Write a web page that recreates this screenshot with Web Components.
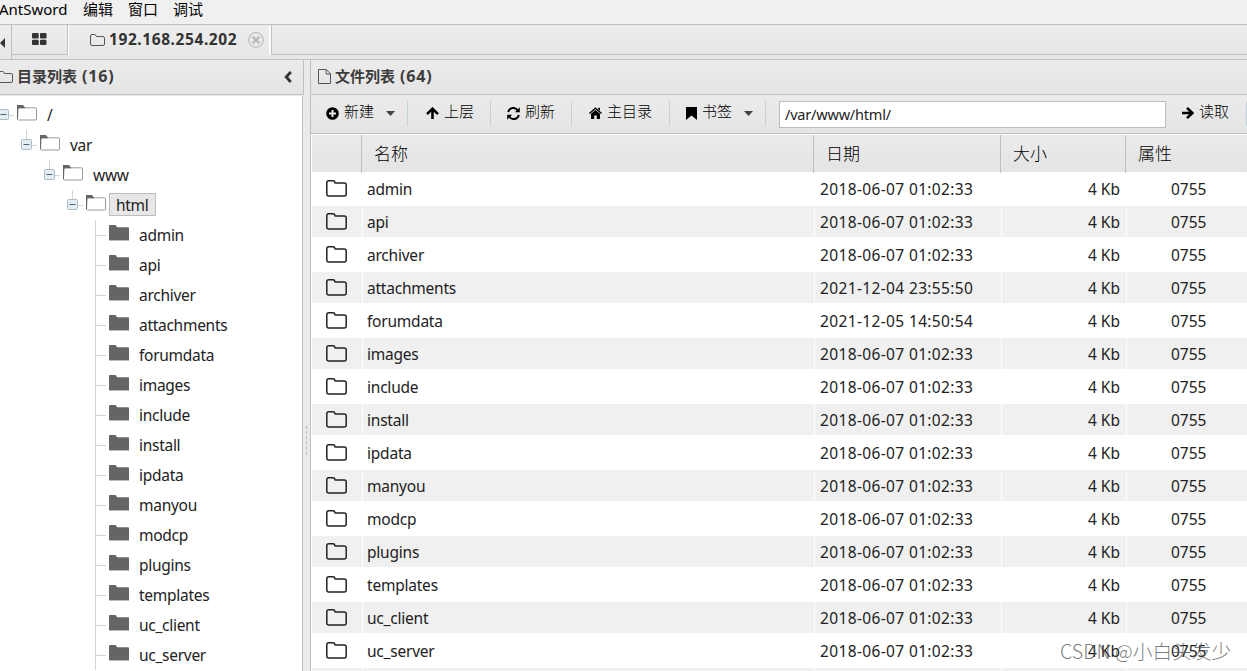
<!DOCTYPE html>
<html lang="zh">
<head>
<meta charset="utf-8">
<title>AntSword</title>
<style>
    html, body { margin: 0; height: 100%; overflow: hidden; background: #fff; }
    body { font-family: "Noto Sans", "Noto Sans CJK SC", sans-serif; font-size: 15.5px; color: #222; }
</style>
</head>
<body>
<ant-app></ant-app>
<script>
const ICONS = {
    grid: [15, 12, '<path fill="#333" d="M1 0h5q.7 0 .7 1v3.500q0 1-.7 1H1q-1 0-1-1V1q0-1 1-1zM9 0h4.500q1 0 1 1v3.500q0 1-1 1H9q-1 0-1-1V1q0-1 1-1zM1 6.700h5q.7 0 .7 1V11q0 1-.7 1H1q-1 0-1-1V7.700q0-1 1-1zM9 6.700h4.500q1 0 1 1V11q0 1-1 1H9q-1 0-1-1V7.700q0-1 1-1z"/>'],
    folder: [15, 12, '<path fill="none" stroke="#555" d="M.5 2Q.5.5 2 .5h2.5Q6 .5 6 2q0 .5.7.5h6.2q1.6 0 1.6 1.6V10q0 1.5-1.5 1.5H2Q.5 11.5.5 10z"/>'],
    rowfolder: [21, 17, '<path fill="none" stroke="#222" stroke-width="1.5" d="M.8 2.8Q.8.8 2.8.8h4q2 0 2 1.7 0 .6.8.6h8.6q2 0 2 2v9q0 2-2 2H2.8q-2 0-2-2z"/>'],
    file: [13, 15, '<path fill="none" stroke="#555" d="M.5.5h7.8l4.2 4.3v9.7H.5zM8.2.8v4.2h4"/>'],
    close: [16, 16, '<circle cx="8" cy="8" r="7.3" fill="none" stroke="#bbb" stroke-width="1.2"/><path stroke="#bbb" stroke-width="2.6" d="M4.6 4.6l6.8 6.8M11.4 4.6l-6.8 6.8"/>'],
    left: [8, 12, '<path fill="none" stroke="#333" stroke-width="2.8" d="M6.800 1L2.200 6l4.600 5"/>'],
    back: [5, 10, '<path fill="#333" d="M5 0v10L0 5z"/>'],
    plus: [13, 13, '<circle cx="6.500" cy="6.500" r="6.300"/><path stroke="#eaeaea" stroke-width="2" d="M6.500 3v7M3 6.500h7"/>'],
    up: [13, 12, '<path fill="none" stroke="#000" stroke-width="2.600" d="M6.500 12V2M1 7.200L6.500 1.700 12 7.200"/>'],
    go: [12, 12, '<path fill="none" stroke="#000" stroke-width="2.600" d="M0 6h10M5 .9L10.300 6 5 11.100"/>'],
    refresh: [13, 13, '<path fill="none" stroke="#000" stroke-width="1.900" d="M1.200 5.200C2 .4 8.500-.6 10.800 3.600M11.800 7.800C11 12.600 4.500 13.600 2.200 9.400"/><path d="M12.800.3v5H7.900zM.2 12.700v-5h4.900z"/>'],
    home: [13, 12, '<path d="M6.500 3L11 6.800V12H7.800V8.500H5.200V12H2V6.800z"/><path fill="none" stroke="#000" stroke-width="1.300" d="M.4 6.500L6.500 1.200 12.600 6.500"/><path d="M9.300.8H11v3L9.300 2.500z"/>'],
    bookmark: [11, 13, '<path d="M0 0h11v13L5.500 8.500 0 13z"/>'],
    caret: [9, 5, '<path fill="#444" d="M0 0h9L4.500 5z"/>'],
    open: [20, 16, '<path fill="#fff" stroke="#999" d="M1 4.500Q1 2.800 2 2.800h16.500q1 0 1 1v10.200q0 1-1 1h-17q-1 0-1-1z"/><path fill="#666" d="M0 0h6l2 2.500v.8H2q-1 0-1 2V14H0z"/>'],
    closed: [20, 16, '<path fill="#656565" d="M0 .8Q0 0 1 0h5q1 0 1.400 1l.6 1.200h11q1 0 1 1V15H0z"/><path stroke="#bbb" d="M0 15.500h20"/>'],
    minus: [11, 11, '<rect x=".5" y=".5" width="10" height="10" rx="1" fill="#e6edf2" stroke="#a9bcc6"/><path stroke="#456878" d="M2.500 5.500h6"/>'],
};

class AntIcon extends HTMLElement {
    connectedCallback() {
        const [w, h, body] = ICONS[this.getAttribute("name")];
        this.attachShadow({ mode: "open" }).innerHTML =
            `<style>:host { display: block; flex: none; } svg { display: block; }</style>
            <svg width="${w}" height="${h}" viewBox="0 0 ${w} ${h}">${body}</svg>`;
    }
}
customElements.define("ant-icon", AntIcon);

class AntMenu extends HTMLElement {
    connectedCallback() {
        this.attachShadow({ mode: "open" }).innerHTML = `
        <style>
            :host { display: flex; height: 24px; background: #f0f0f0; color: #000; font-size: 15px; line-height: 19px; border-bottom: 1px solid #c0c0c0; }
            span { margin-right: 15px; }
            .name { width: 69px; margin: 0 15px 0 -1px; white-space: nowrap; }
        </style>
        <span class="name">AntSword</span><span>编辑</span><span>窗口</span><span>调试</span>`;
    }
}
customElements.define("ant-menu", AntMenu);

class AntTabs extends HTMLElement {
    connectedCallback() {
        this.attachShadow({ mode: "open" }).innerHTML = `
        <style>
            :host { display: flex; height: 34px; background: linear-gradient(#ededed, #e6e6e6); border-bottom: 1px solid #c0c0c0; }
            div { box-sizing: border-box; display: flex; }
            .back { width: 12px; height: 34px; border-right: 1px solid #c0c0c0; padding-top: 13px; }
            .home { width: 56px; height: 30px; border-bottom: 1px solid #c0c0c0; border-right: 1px solid #c0c0c0; padding: 8px 0 0 20px; }
            .tab { width: 203px; height: 30px; border-left: 1px solid #fff; border-right: 2px solid #fff; padding-left: 21px; align-items: center; }
            .tab ant-icon { margin-top: -1px; }
            b { width: 131px; margin: -2px 8px 0 4px; color: #333; line-height: 28px; font-size: 15.5px; letter-spacing: .58px; white-space: nowrap; }
            .rest { flex: 1; height: 30px; border-left: 1px solid #c0c0c0; border-bottom: 1px solid #c0c0c0; }
        </style>
        <div class="back"><ant-icon name="back"></ant-icon></div>
        <div class="home"><ant-icon name="grid"></ant-icon></div>
        <div class="tab"><ant-icon name="folder"></ant-icon><b>192.168.254.202</b><ant-icon name="close"></ant-icon></div>
        <div class="rest"></div>`;
    }
}
customElements.define("ant-tabs", AntTabs);

// header bar of a panel, the title is slotted
class AntHead extends HTMLElement {
    connectedCallback() {
        this.attachShadow({ mode: "open" }).innerHTML = `
        <style>
            :host { display: flex; flex: none; box-sizing: border-box; height: 35px; align-items: center; background: linear-gradient(#ebebeb, #e4e4e4); border-bottom: 1px solid #c0c0c0; color: #3c3c3c; font-weight: bold; font-size: 15px; }
            .title { flex: 1; margin: -2px 0 0 4px; line-height: 32px; white-space: nowrap; }
            .count { margin-left: 5px; font-size: 16px; letter-spacing: .8px; }
            ant-icon { margin-top: -1px; }
        </style>
        <ant-icon name="${this.getAttribute("icon")}"></ant-icon>
        <span class="title"><slot></slot><span class="count">(${this.getAttribute("count")})</span></span>
        <slot name="end"></slot>`;
    }
}
customElements.define("ant-head", AntHead);

class TreeNode extends HTMLElement {
    connectedCallback() {
        const level = Number(this.getAttribute("level"));
        const leaf = level === 4;
        this.attachShadow({ mode: "open" }).innerHTML = `
        <style>
            :host { display: flex; height: 30px; margin-left: ${level * 23 - 9}px; }
            .cell { width: 23px; height: 30px; margin-right: 3px; background:
                linear-gradient(#d4d4d4, #d4d4d4) 12px 0 / 1px ${leaf ? 30 : level ? 10 : 0}px no-repeat,
                linear-gradient(#d4d4d4, #d4d4d4) 12px 15px / 12px 1px no-repeat; }
            .cell ant-icon { margin: 9px 0 0 7px; }
            .pic { margin-top: 5px; }
            .text { box-sizing: border-box; height: 23px; margin: 3px 0 0 3px; padding: 0 6px; border: 1px solid transparent; line-height: 22px; letter-spacing: -.28px; white-space: nowrap; }
            :host([selected]) .text { background: #e7e7e7; border-color: #bdbdbd; }
        </style>
        <div class="cell">${leaf ? "" : '<ant-icon name="minus"></ant-icon>'}</div>
        <ant-icon class="pic" name="${leaf ? "closed" : "open"}"></ant-icon>
        <span class="text"><slot></slot></span>`;
    }
}
customElements.define("tree-node", TreeNode);

const DIRS = ["admin", "api", "archiver", "attachments", "forumdata", "images", "include", "install", "ipdata",
    "manyou", "modcp", "plugins", "templates", "uc_client", "uc_server"];
const TIMES = { attachments: "2021-12-04 23:55:50", forumdata: "2021-12-05 14:50:54" };

class AntTree extends HTMLElement {
    connectedCallback() {
        let html = "";
        ["/", "var", "www", "html"].forEach((name, i) => {
            html += `<tree-node level="${i}" ${name === "html" ? "selected" : ""}>${name}</tree-node>`;
        });
        DIRS.forEach(name => { html += `<tree-node level="4">${name}</tree-node>`; });
        this.attachShadow({ mode: "open" }).innerHTML = `
        <style>
            :host { display: block; flex: 1; min-height: 0; overflow: hidden; margin-top: 1px; padding-top: 4px; background: #fff; border-right: 1px solid #c0c0c0; width: 302px; }
        </style>${html}`;
    }
}
customElements.define("ant-tree", AntTree);

class ToolItem extends HTMLElement {
    connectedCallback() {
        this.attachShadow({ mode: "open" }).innerHTML = `
        <style>
            :host { display: flex; box-sizing: border-box; flex: none; height: 25px; align-items: center; border-right: 1px solid #c3d0d6; color: #000; }
            .text { line-height: 20px; margin: -5px 12px 0 5px; font-size: 15px; font-weight: 300; white-space: nowrap; }
            ant-icon { margin-top: -1px; }
        </style>
        <ant-icon name="${this.getAttribute("icon")}"></ant-icon>
        <span class="text"><slot></slot></span>
        ${this.hasAttribute("caret") ? '<ant-icon name="caret"></ant-icon>' : ""}`;
    }
}
customElements.define("tool-item", ToolItem);

class AntToolbar extends HTMLElement {
    connectedCallback() {
        this.attachShadow({ mode: "open" }).innerHTML = `
        <style>
            :host { display: flex; flex: none; box-sizing: border-box; height: 39px; padding-top: 6px; background: linear-gradient(#ebebeb, #e4e4e4); border-bottom: 1px solid #c0c0c0; }
            .new { width: 97px; padding-left: 15px; }
            .up { width: 83px; padding-left: 18px; }
            .refresh { width: 81px; padding-left: 16px; }
            .home { width: 98px; padding-left: 17px; }
            .mark { width: 96px; padding-left: 16px; }
            .go { width: 81px; padding-left: 16px; }
            .path { box-sizing: border-box; width: 387px; height: 27px; margin-left: 13px; padding-left: 5px; background: #fff; border: 1px solid #bdbdbd; font-size: 14.5px; letter-spacing: -.2px; line-height: 25px; }
        </style>
        <tool-item class="new" icon="plus" caret>新建</tool-item>
        <tool-item class="up" icon="up">上层</tool-item>
        <tool-item class="refresh" icon="refresh">刷新</tool-item>
        <tool-item class="home" icon="home">主目录</tool-item>
        <tool-item class="mark" icon="bookmark" caret>书签</tool-item>
        <div class="path">/var/www/html/</div>
        <tool-item class="go" icon="go">读取</tool-item>`;
    }
}
customElements.define("ant-toolbar", AntToolbar);

class FileGrid extends HTMLElement {
    connectedCallback() {
        let rows = "";
        [...DIRS, ""].forEach(name => {
            rows += `<div class="row">
                <div><ant-icon name="rowfolder"></ant-icon></div><div>${name}</div>
                <div class="date">${name && (TIMES[name] || "2018-06-07 01:02:33")}</div>
                <div class="size">${name && "4 Kb"}</div><div class="attr">${name && "0755"}</div>
            </div>`;
        });
        this.attachShadow({ mode: "open" }).innerHTML = `
        <style>
            :host { display: block; margin: 1px 0 0 1px; flex: 1; min-height: 0; overflow: hidden; background: #fff; }
            .head, .row { display: grid; grid-template-columns: 50px 452px 187px 125px 121px; }
            .head { height: 37px; background: linear-gradient(#ebebeb, #e4e4e4); font-size: 17px; line-height: 38px; color: #000; font-weight: 300; }
            .head div { padding-left: 12px; border-right: 1px solid #c0c0c0; }
            .head div:last-child { border: 0; }
            .row { height: 33px; line-height: 32px; letter-spacing: -.22px; }
            .row div { margin: 1px 0; height: 31px; border-left: 1px solid #fff; padding-left: 4px; white-space: nowrap; }
            .row div:first-child { border: 0; padding: 7px 0 0 14px; height: 24px; }
            .row:nth-of-type(odd) div { background: #f0f0f0; }
            .row .date { padding-left: 5px; letter-spacing: .36px; }
            .row .size { text-align: right; padding: 0 6px 0 0; letter-spacing: 0; }
            .row .attr { padding-left: 44px; letter-spacing: 0; }
        </style>
        <div class="head"><div></div><div>名称</div><div>日期</div><div>大小</div><div>属性</div></div>${rows}`;
    }
}
customElements.define("file-grid", FileGrid);

class AntApp extends HTMLElement {
    connectedCallback() {
        this.attachShadow({ mode: "open" }).innerHTML = `
        <style>
            :host { display: flex; flex-direction: column; height: 100vh; position: relative; overflow: hidden; }
            main { display: flex; flex: 1; min-height: 0; background: #eaeaea; }
            .left, .right { display: flex; flex-direction: column; min-height: 0; }
            .left { width: 304px; }
            .left ant-head { margin-left: -2px; border-right: 1px solid #c0c0c0; }
            .left ant-icon { margin-right: 11px; }
            .split { width: 6px; display: flex; align-items: center; }
            .split i { width: 0; height: 29px; margin: 150px 0 0 2px; border-left: 1px dashed #bbb; }
            .right { flex: 1; border-left: 1px solid #c0c0c0; background: #fff; }
            .right ant-head { padding-left: 7px; }
            .mark { position: absolute; left: 1060px; top: 637px; font-size: 19.7px; line-height: 27px; color: rgba(80, 80, 80, .75); font-weight: 300; white-space: nowrap; font-family: "Noto Sans CJK SC", sans-serif; }
        </style>
        <ant-menu></ant-menu>
        <ant-tabs></ant-tabs>
        <main>
            <section class="left">
                <ant-head icon="folder" count="16">目录列表<ant-icon slot="end" name="left"></ant-icon></ant-head>
                <ant-tree></ant-tree>
            </section>
            <div class="split"><i></i></div>
            <section class="right">
                <ant-head icon="file" count="64">文件列表</ant-head>
                <ant-toolbar></ant-toolbar>
                <file-grid></file-grid>
            </section>
        </main>
        <div class="mark">CSDN @小白头发少</div>`;
    }
}
customElements.define("ant-app", AntApp);
</script>
</body>
</html>
